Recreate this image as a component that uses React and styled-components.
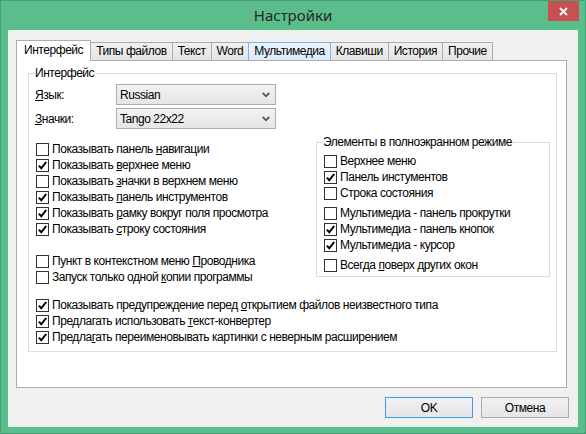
import React from "react";
import styled, { createGlobalStyle } from "styled-components";

const Global = createGlobalStyle`
  html, body { margin: 0; padding: 0; }
  body {
    font-family: "Liberation Sans", Arial, sans-serif;
    font-size: 12px;
    letter-spacing: -0.45px;
    color: #000;
  }
  * { box-sizing: border-box; }
`;

const Window = styled.div`
  width: 586px;
  height: 434px;
  background: #5bbd8b;
  border: 1px solid #449f72;
  display: flex;
  flex-direction: column;
`;

const TitleBar = styled.div`
  height: 29px;
  display: grid;
  grid-template-columns: 1fr auto 1fr;
  align-items: start;
`;

const Title = styled.div`
  grid-column: 2;
  font-family: "Noto Sans", sans-serif;
  font-size: 15px;
  letter-spacing: 0;
  line-height: 29px;
  color: #262626;
`;

const CloseButton = styled.div`
  grid-column: 3;
  justify-self: end;
  width: 31px;
  height: 20px;
  margin-right: 6px;
  background: #c75050;
  display: flex;
  align-items: center;
  justify-content: center;
`;

const Client = styled.div`
  flex: 1;
  margin: 0 7px 7px 7px;
  background: #f0f0f0;
  border: 1px solid #e4f3eb;
  padding: 8px 8px 8px 7px;
  display: flex;
  flex-direction: column;
`;

const TabStrip = styled.div`
  display: flex;
  align-items: flex-end;
  height: 21px;
  position: relative;
  z-index: 1;
`;

const Tab = styled.div`
  height: ${(p) => (p.$active ? "21px" : "18px")};
  margin-bottom: ${(p) => (p.$active ? "-1px" : "0")};
  margin-left: ${(p) => (p.$first ? "0" : "-1px")};
  padding: 0 ${(p) => (p.$active ? "7px" : "5px")};
  border: 1px solid ${(p) => (p.$hover ? "#7eb4ea" : "#acacac")};
  border-bottom: none;
  background: ${(p) =>
    p.$active
      ? "#ffffff"
      : p.$hover
      ? "linear-gradient(#ecf4fc, #dcecfc)"
      : "linear-gradient(#f0f0f0, #e5e5e5)"};
  line-height: ${(p) => (p.$active ? "19px" : "17px")};
  white-space: nowrap;
  z-index: ${(p) => (p.$active ? 2 : p.$hover ? 1 : 0)};
`;

const Panel = styled.div`
  width: 551px;
  height: 328px;
  background: #fff;
  border: 1px solid #acacac;
  padding: 4px 9px 0 11px;
`;

const Group = styled.fieldset`
  margin: 0;
  min-width: 0;
  border: 1px solid #dcdcdc;
  padding: 3px 5px 6px 6px;
`;

const Legend = styled.legend`
  padding: 0;
  line-height: 16px;
`;

const FieldRow = styled.div`
  display: flex;
  align-items: center;
  height: 21px;
  & + & { margin-top: 3px; }
`;

const FieldLabel = styled.div`
  width: 81px;
`;

const Combo = styled.div`
  width: 160px;
  height: 21px;
  border: 1px solid #acacac;
  background: linear-gradient(#f2f2f2, #e5e5e5);
  display: flex;
  align-items: center;
  padding: 0 5px 0 3px;
  justify-content: space-between;
`;

const Columns = styled.div`
  display: grid;
  grid-template-columns: 281px 234px;
  margin-top: 5px;
  align-items: start;
`;

const LeftCol = styled.div`
  padding-top: 7px;
  display: flex;
  flex-direction: column;
`;

const Spacer = styled.div`
  height: ${(p) => p.$h}px;
`;

const SubGroup = styled(Group)`
  padding: 3px 6px 3px 6px;
`;

const BottomList = styled.div`
  margin-top: 12px;
`;

const CheckRow = styled.div`
  display: flex;
  align-items: center;
  height: 16px;
  white-space: nowrap;
`;

const Box = styled.span`
  width: 13px;
  height: 13px;
  margin-left: 1px;
  margin-right: 3px;
  border: 1px solid #333;
  background: #fff;
  display: flex;
  align-items: center;
  justify-content: center;
  flex: none;
`;

const ButtonRow = styled.div`
  display: flex;
  justify-content: flex-end;
  gap: 8px;
  margin-top: 9px;
`;

const Button = styled.div`
  width: 88px;
  height: 21px;
  border: 1px solid ${(p) => (p.$default ? "#3c9cf0" : "#acacac")};
  background: linear-gradient(#f2f2f2, #e5e5e5);
  display: flex;
  align-items: center;
  justify-content: center;
`;

const Chevron = () => (
  <svg width="8" height="6" viewBox="0 0 8 6">
    <path d="M0.8 1 L4 4.3 L7.2 1" fill="none" stroke="#555" strokeWidth="1.8" />
  </svg>
);

const Check = ({ checked, children }) => (
  <CheckRow>
    <Box>
      {checked && (
        <svg width="11" height="11" viewBox="0 0 11 11">
          <path d="M1.8 5.6 L4.3 8.2 L9.2 2" fill="none" stroke="#000" strokeWidth="2" />
        </svg>
      )}
    </Box>
    <span>{children}</span>
  </CheckRow>
);

const tabs = [
  "Интерфейс",
  "Типы файлов",
  "Текст",
  "Word",
  "Мультимедиа",
  "Клавиши",
  "История",
  "Прочие",
];

export default function App() {
  return (
    <>
      <Global />
      <Window>
        <TitleBar>
          <Title>Настройки</Title>
          <CloseButton>
            <svg width="9" height="9" viewBox="0 0 9 9">
              <path d="M1 1 L8 8 M8 1 L1 8" stroke="#fff" strokeWidth="1.8" />
            </svg>
          </CloseButton>
        </TitleBar>
        <Client>
          <TabStrip>
            {tabs.map((t, i) => (
              <Tab key={t} $active={i === 0} $first={i === 0} $hover={i === 4}>
                {t}
              </Tab>
            ))}
          </TabStrip>
          <Panel>
            <Group>
              <Legend>Интерфейс</Legend>
              <FieldRow>
                <FieldLabel><u>Я</u>зык:</FieldLabel>
                <Combo>Russian<Chevron /></Combo>
              </FieldRow>
              <FieldRow>
                <FieldLabel><u>З</u>начки:</FieldLabel>
                <Combo>Tango 22x22<Chevron /></Combo>
              </FieldRow>
              <Columns>
                <LeftCol>
                  <Check>Показывать панель <u>н</u>авигации</Check>
                  <Check checked>Показывать <u>в</u>ерхнее меню</Check>
                  <Check>Показывать <u>з</u>начки в верхнем меню</Check>
                  <Check checked>Показывать <u>п</u>анель инструментов</Check>
                  <Check checked>Показывать <u>р</u>амку вокруг поля просмотра</Check>
                  <Check checked>Показывать <u>с</u>троку состояния</Check>
                  <Spacer $h={16} />
                  <Check>Пункт в контекстном меню <u>П</u>роводника</Check>
                  <Check>Запуск только одной <u>к</u>опии программы</Check>
                </LeftCol>
                <SubGroup>
                  <Legend>Элементы в полноэкранном режиме</Legend>
                  <Check>Верхнее меню</Check>
                  <Check checked>Панель инстументов</Check>
                  <Check>Строка состояния</Check>
                  <Spacer $h={4} />
                  <Check>Мультимедиа - панель прокрутки</Check>
                  <Check checked>Мультимедиа - панель кнопок</Check>
                  <Check checked>Мультимедиа - курсор</Check>
                  <Spacer $h={4} />
                  <Check>Всегда <u>п</u>оверх других окон</Check>
                </SubGroup>
              </Columns>
              <BottomList>
                <Check checked>Показывать предупреждение перед <u>о</u>ткрытием файлов неизвестного типа</Check>
                <Check checked>Предлагать использовать <u>т</u>екст-конвертер</Check>
                <Check checked>Предла<u>г</u>ать переименовывать картинки с неверным расширением</Check>
              </BottomList>
            </Group>
          </Panel>
          <ButtonRow>
            <Button $default>OK</Button>
            <Button>Отмена</Button>
          </ButtonRow>
        </Client>
      </Window>
    </>
  );
}
